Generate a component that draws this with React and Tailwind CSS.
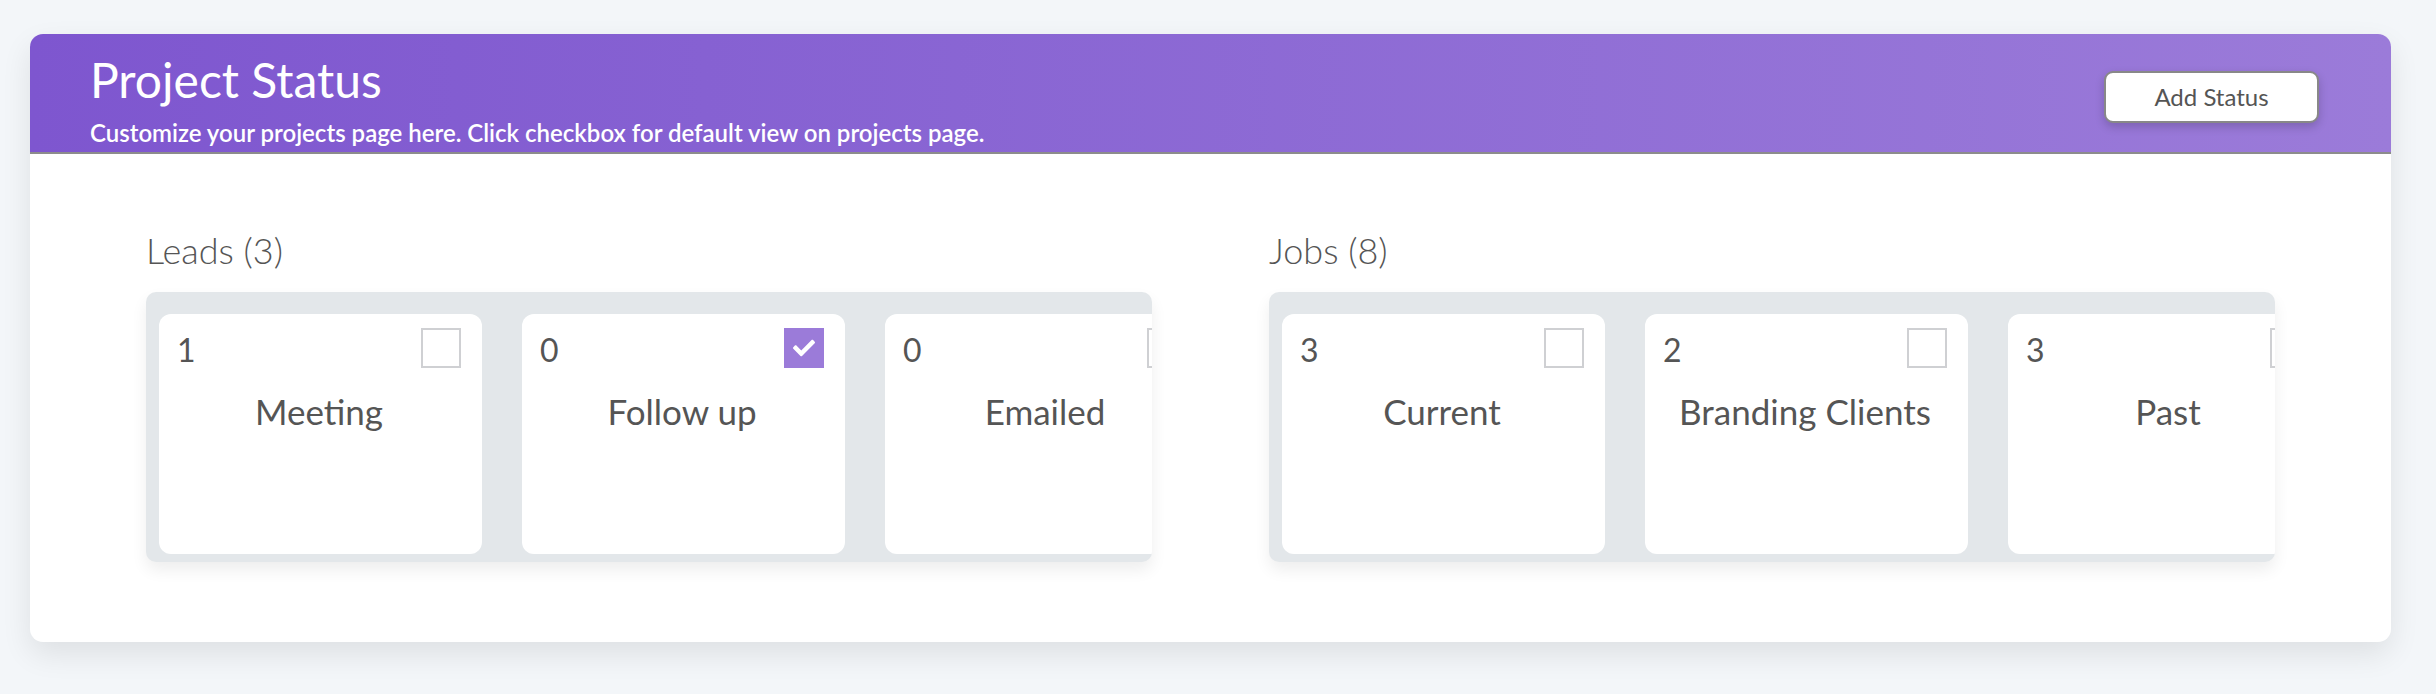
import { FaCheck } from 'react-icons/fa'

const groups = [
  {
    title: 'Leads (3)',
    items: [
      { count: 1, name: 'Meeting', checked: false },
      { count: 0, name: 'Follow up', checked: true },
      { count: 0, name: 'Emailed', checked: false },
    ],
  },
  {
    title: 'Jobs (8)',
    items: [
      { count: 3, name: 'Current', checked: false },
      { count: 2, name: 'Branding Clients', checked: false },
      { count: 3, name: 'Past', checked: false },
    ],
  },
]

function StatusCard({ item }) {
  return (
    <div className="w-[323px] h-[240px] shrink-0 rounded-[12px] bg-white pl-[18px] pr-[21px] pt-[14px]">
      <div className="flex items-start justify-between">
        <span className="mt-[6px] text-[32px] leading-none text-[#555]">{item.count}</span>
        {item.checked ? (
          <span className="flex h-[40px] w-[40px] items-center justify-center bg-[#9b7bd9]">
            <FaCheck className="text-white" size={22} />
          </span>
        ) : (
          <span className="h-[40px] w-[40px] border-2 border-[#cfd0d3] bg-white" />
        )}
      </div>
      <p className="mt-[26px] text-center text-[35px] leading-none text-[#555]">{item.name}</p>
    </div>
  )
}

export default function App() {
  return (
    <div className="min-h-screen bg-[#f3f6f9] pt-[34px] pl-[30px] pr-[45px] font-['Lato',sans-serif]">
      <div className="overflow-hidden rounded-[13px] bg-white shadow-[0_12px_30px_rgba(0,0,0,0.09)]">
        <div className="flex h-[120px] items-start justify-between border-b-2 border-[#8c8c8c] bg-gradient-to-r from-[#7e56cf] to-[#9b7bd9] pl-[60px] pr-[72px]">
          <div className="pt-[22px] text-white">
            <h1 className="text-[48px] leading-none font-normal">Project Status</h1>
            <p className="mt-[17px] text-[24px] leading-none font-semibold">
              Customize your projects page here. Click checkbox for default view on projects page.
            </p>
          </div>
          <button className="mt-[37px] h-[52px] w-[215px] rounded-[9px] border-2 border-[#888] bg-white text-[24px] text-[#555] shadow-[0_4px_10px_rgba(0,0,0,0.18)]">
            Add Status
          </button>
        </div>

        <div className="grid grid-cols-2 gap-[117px] px-[116px] pt-[78px] pb-[80px]">
          {groups.map((group) => (
            <div key={group.title}>
              <h2 className="text-[36px] leading-none font-light text-[#555]">{group.title}</h2>
              <div className="mt-[24px] flex h-[270px] gap-[40px] overflow-hidden rounded-[10px] bg-[#e3e7ea] pl-[13px] pt-[22px] shadow-[0_8px_16px_rgba(0,0,0,0.07)]">
                {group.items.map((item) => (
                  <StatusCard key={item.name} item={item} />
                ))}
              </div>
            </div>
          ))}
        </div>
      </div>
    </div>
  )
}
